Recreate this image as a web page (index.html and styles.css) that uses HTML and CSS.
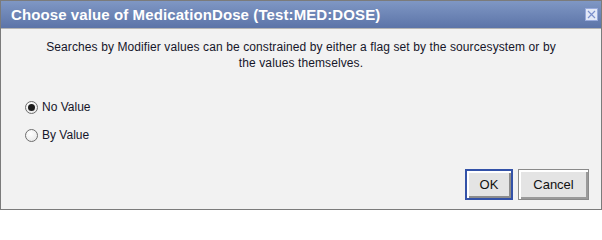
FILE: index.html
```html
<!DOCTYPE html>
<html>
<head>
<meta charset="utf-8">
<link rel="stylesheet" href="styles.css">
</head>
<body>
<div class="dialog">
  <div class="titlebar">
    <span class="title">Choose value of MedicationDose (Test:MED:DOSE)</span>
    <span class="close"><svg width="13" height="13" viewBox="0 0 13 13"><rect x="0.5" y="0.5" width="12" height="12" fill="#e3e9f7" stroke="#98aadb"/><path d="M3 3 L10 10 M10 3 L3 10" stroke="#7b90cc" stroke-width="1.2"/></svg></span>
  </div>
  <div class="body">
    <p class="desc">Searches by Modifier values can be constrained by either a flag set by the sourcesystem or by the values themselves.</p>
    <div class="options">
      <label class="opt"><span class="radio checked"></span>No Value</label>
      <label class="opt"><span class="radio"></span>By Value</label>
    </div>
    <div class="buttons">
      <button class="btn default">OK</button>
      <button class="btn">Cancel</button>
    </div>
  </div>
</div>
</body>
</html>
```
FILE: styles.css
```css
html, body {
  margin: 0;
  padding: 0;
}
body {
  width: 602px;
  height: 211px;
  font-family: "Liberation Sans", Arial, sans-serif;
  overflow: hidden;
}
.dialog {
  box-sizing: border-box;
  width: 602px;
  height: 210px;
  border: 1px solid #7b7b7b;
  background: #f2f2f2;
  display: flex;
  flex-direction: column;
}
.titlebar {
  height: 27px;
  flex: none;
  display: flex;
  align-items: center;
  justify-content: space-between;
  padding: 0 3px 0 10px;
  background: linear-gradient(#7f97c4, #5c74a8);
  border-bottom: 1px solid #b4b4b4;
}
.title {
  color: #fff;
  font-weight: bold;
  font-size: 15px;
  letter-spacing: 0.1px;
}
.close {
  display: flex;
  margin-top: -1px;
}
.body {
  flex: 1;
  display: flex;
  flex-direction: column;
  padding: 0 12px 9px 24px;
}
.desc {
  margin: 10px 0 0 0;
  padding: 0 32px 0 20px;
  text-align: center;
  font-size: 12px;
  line-height: 16px;
  letter-spacing: 0.1px;
  color: #16162a;
}
.options {
  margin-top: 28px;
  display: flex;
  flex-direction: column;
  gap: 12px;
}
.opt {
  display: flex;
  align-items: center;
  gap: 4px;
  font-size: 12px;
  color: #16162a;
  height: 16px;
}
.radio {
  box-sizing: border-box;
  width: 13px;
  height: 13px;
  border-radius: 50%;
  border: 1px solid #6e6e6e;
  background: radial-gradient(circle at 40% 35%, #ffffff, #e4e4e4);
  display: flex;
  align-items: center;
  justify-content: center;
}
.radio.checked::after {
  content: "";
  width: 7px;
  height: 7px;
  border-radius: 50%;
  background: #1c1c1c;
}
.buttons {
  margin-top: auto;
  display: flex;
  justify-content: flex-end;
  gap: 5px;
}
.btn {
  box-sizing: border-box;
  height: 31px;
  font-family: "Liberation Sans", Arial, sans-serif;
  font-size: 13px;
  color: #111;
  background: #e4e4e4;
  border: 1px solid #8a8a8a;
  box-shadow: inset 2px 2px 0 #ffffff, inset -2px -2px 0 #9a9a9a;
  padding: 0;
  width: 71px;
}
.btn.default {
  width: 48px;
  border: 2px solid #3352a8;
  box-shadow: inset 2px 2px 0 #ffffff, inset -2px -2px 0 #8c8c8c;
}
```
